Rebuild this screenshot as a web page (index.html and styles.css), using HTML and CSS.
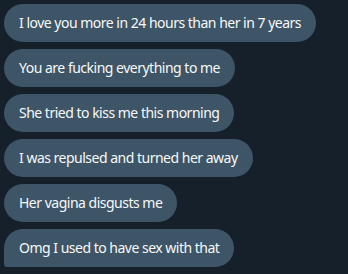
FILE: index.html
```html
<!DOCTYPE html>
<html>
<head>
<meta charset="utf-8">
<link rel="stylesheet" href="styles.css">
</head>
<body>
<div class="chat">
  <div class="msg">I love you more in 24 hours than her in 7 years</div>
  <div class="msg">You are fucking everything to me</div>
  <div class="msg">She tried to kiss me this morning</div>
  <div class="msg">I was repulsed and turned her away</div>
  <div class="msg">Her vagina disgusts me</div>
  <div class="msg last">Omg I used to have sex with that</div>
</div>
</body>
</html>
```
FILE: styles.css
```css
html, body {
  margin: 0;
  padding: 0;
  background: #15202b;
  width: 348px;
  height: 274px;
  overflow: hidden;
}
.chat {
  display: flex;
  flex-direction: column;
  align-items: flex-start;
  gap: 7px;
  padding: 4px;
}
.msg {
  background: #3e5568;
  color: #f7f9f9;
  font-family: "Noto Sans", "Open Sans", sans-serif;
  font-size: 14px;
  height: 38px;
  line-height: 38px;
  padding: 0 15px;
  border-radius: 19px;
  white-space: nowrap;
  letter-spacing: -0.5px;
}
.msg.last {
  border-bottom-left-radius: 3px;
}
```
